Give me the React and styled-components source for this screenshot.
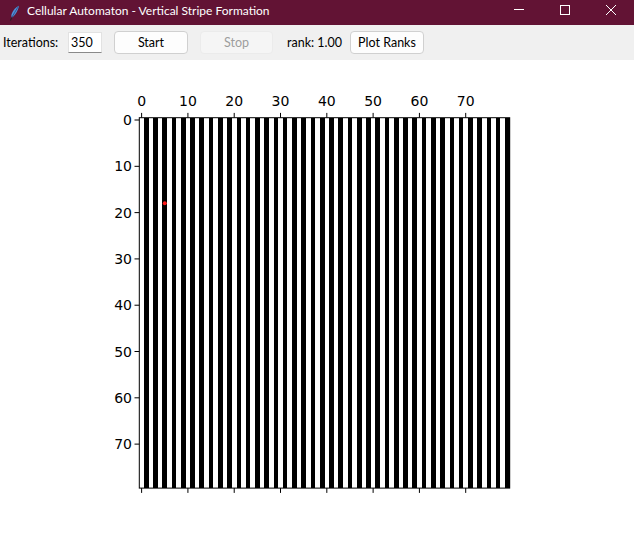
import React from "react";
import styled, { createGlobalStyle } from "styled-components";

const GlobalStyle = createGlobalStyle`
  html, body {
    margin: 0;
    padding: 0;
    background: #ffffff;
  }
`;

const Window = styled.div`
  width: 634px;
  height: 534px;
  display: flex;
  flex-direction: column;
  font-family: "Lato", "Noto Sans", sans-serif;
  font-size: 12.5px;
  color: #000;
  overflow: hidden;
`;

const TitleBar = styled.div`
  height: 25px;
  flex: 0 0 25px;
  background: #621334;
  display: flex;
  align-items: center;
  color: #ffffff;
`;

const AppIcon = styled.div`
  width: 26px;
  height: 25px;
  display: flex;
  align-items: center;
  justify-content: center;
  padding-left: 1px;
`;

const Title = styled.div`
  flex: 1;
  font-size: 12px;
  line-height: 20px;
  padding-bottom: 3px;
`;

const Controls = styled.div`
  display: flex;
  height: 100%;
`;

const ControlButton = styled.div`
  width: 46px;
  height: 100%;
  display: flex;
  align-items: flex-start;
  justify-content: center;
  padding-top: ${(p) => p.$top || 5}px;
  box-sizing: border-box;
`;

const Toolbar = styled.div`
  height: 35px;
  flex: 0 0 35px;
  background: #f0f0f0;
  display: flex;
  align-items: center;
  padding-left: 3px;
  box-sizing: border-box;
`;

const Label = styled.span`
  width: ${(p) => p.$w}px;
  flex: 0 0 auto;
  white-space: nowrap;
`;

const Entry = styled.div`
  width: 34px;
  height: 21px;
  box-sizing: border-box;
  background: #ffffff;
  border: 1px solid #e2e2e2;
  border-bottom: 1px solid #8a8a8a;
  padding-left: 2px;
  display: flex;
  align-items: center;
  margin-right: 12px;
`;

const Button = styled.div`
  width: ${(p) => p.$w || 74}px;
  height: 23px;
  box-sizing: border-box;
  border: 1px solid ${(p) => (p.$disabled ? "#ebebeb" : "#d0d0d0")};
  border-radius: 4px;
  background: ${(p) => (p.$disabled ? "#f5f5f5" : "#fdfdfd")};
  color: ${(p) => (p.$disabled ? "#9d9d9d" : "#000")};
  display: flex;
  align-items: center;
  justify-content: center;
  margin-right: ${(p) => p.$gap || 0}px;
`;

const Canvas = styled.div`
  flex: 1;
  background: #ffffff;
  display: flex;
`;

const PlotSvg = styled.svg`
  display: block;
  font-family: "DejaVu Sans", sans-serif;
  font-size: 14px;
`;

const N = 80;
const X0 = 139.3;
const Y0 = 117.7;
const CELL = 4.63;

function Feather() {
  return (
    <svg width="11" height="16" viewBox="0 0 10 15">
      <path
        d="M9.2 0.6 C6.5 1.8 3.6 4.6 2.3 8.4 C1.9 9.8 2.0 11.0 2.6 11.6 C4.8 10.6 7.0 7.4 8.2 4.2 C8.8 2.8 9.1 1.6 9.2 0.6 Z"
        fill="#4f8fd8"
      />
      <path d="M8.6 1.4 C6.2 5.0 4.0 9.0 2.2 12.4" stroke="#2b4f86" strokeWidth="0.8" fill="none" />
      <path d="M2.4 11.8 L1.2 14.6" stroke="#222" strokeWidth="1" />
    </svg>
  );
}

function Plot() {
  const stripes = [];
  for (let c = 1; c < N; c += 2) {
    stripes.push(
      <rect key={c} x={X0 + c * CELL} y={Y0} width={CELL} height={N * CELL} fill="#000" />
    );
  }
  const ticks = [0, 10, 20, 30, 40, 50, 60, 70];
  const size = N * CELL;
  return (
    <PlotSvg width="634" height="474" viewBox="0 60 634 474">
      <g shapeRendering="crispEdges">
        <rect x={X0} y={Y0} width={size} height={size} fill="#fff" />
        {stripes}
      </g>
      <circle cx={X0 + 5.5 * CELL} cy={Y0 + 18.5 * CELL} r="2" fill="#ff1a1a" />
      <rect x={X0} y={Y0} width={size} height={size} fill="none" stroke="#000" strokeWidth="1" />
      {ticks.map((t) => {
        const x = X0 + (t + 0.5) * CELL;
        const y = Y0 + (t + 0.5) * CELL;
        return (
          <g key={t}>
            <line x1={x} y1={Y0} x2={x} y2={Y0 - 4.8} stroke="#000" strokeWidth="1" />
            <line x1={x} y1={Y0 + size} x2={x} y2={Y0 + size + 4.8} stroke="#000" strokeWidth="1" />
            <line x1={X0} y1={y} x2={X0 - 4.8} y2={y} stroke="#000" strokeWidth="1" />
            <text x={x} y={105.5} textAnchor="middle" fill="#000">
              {t}
            </text>
            <text x={132} y={y + 5} textAnchor="end" fill="#000">
              {t}
            </text>
          </g>
        );
      })}
    </PlotSvg>
  );
}

export default function App() {
  return (
    <>
      <GlobalStyle />
      <Window>
        <TitleBar>
          <AppIcon>
            <Feather />
          </AppIcon>
          <Title>Cellular Automaton - Vertical Stripe Formation</Title>
          <Controls>
            <ControlButton $top={9}>
              <svg width="10" height="1">
                <rect width="10" height="1" fill="#fff" />
              </svg>
            </ControlButton>
            <ControlButton $top={5}>
              <svg width="10" height="10">
                <rect x="0.5" y="0.5" width="9" height="9" fill="none" stroke="#fff" />
              </svg>
            </ControlButton>
            <ControlButton $top={5}>
              <svg width="10" height="10">
                <path d="M0 0 L10 10 M10 0 L0 10" stroke="#fff" strokeWidth="1" />
              </svg>
            </ControlButton>
          </Controls>
        </TitleBar>
        <Toolbar>
          <Label $w={65}>Iterations:</Label>
          <Entry>350</Entry>
          <Button $w={74} $gap={12}>Start</Button>
          <Button $w={73} $gap={14} $disabled>
            Stop
          </Button>
          <Label $w={63}>rank: 1.00</Label>
          <Button $w={74}>Plot Ranks</Button>
        </Toolbar>
        <Canvas>
          <Plot />
        </Canvas>
      </Window>
    </>
  );
}
